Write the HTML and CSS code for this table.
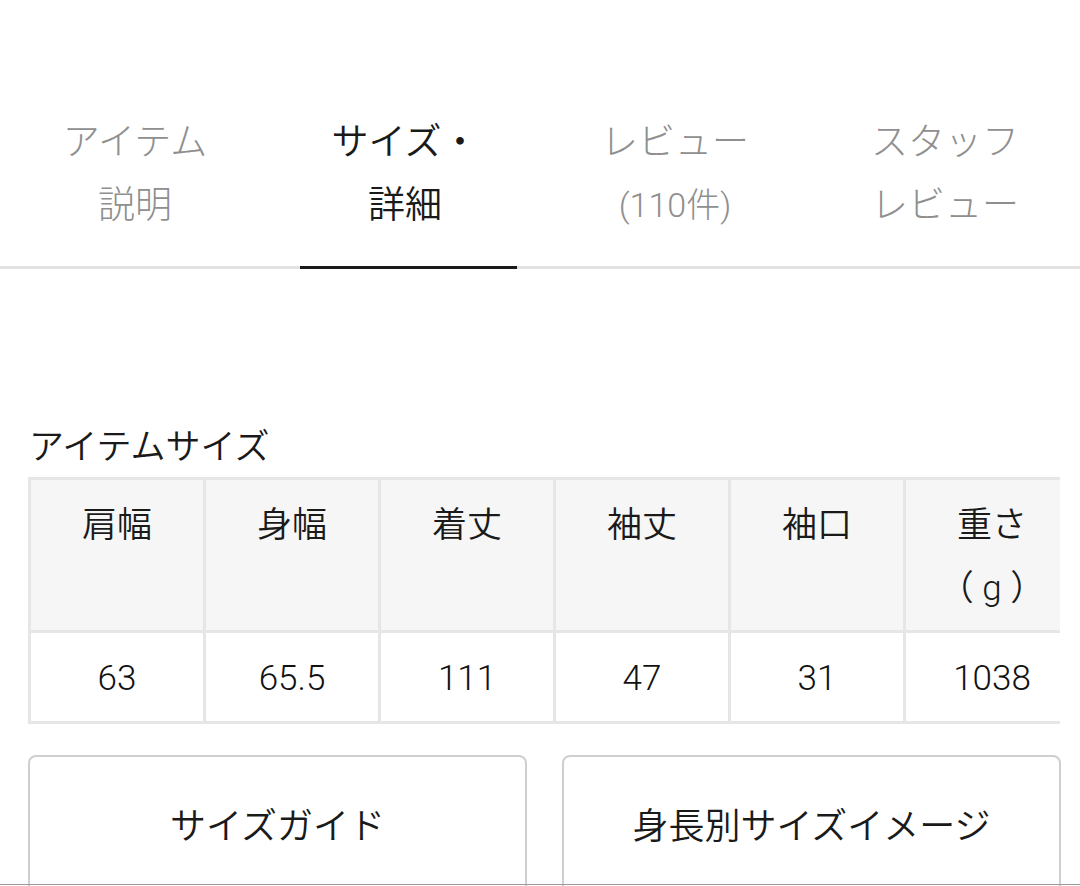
FILE: index.html
```html
<!DOCTYPE html>
<html lang="ja">
<head>
<meta charset="utf-8">
<link rel="stylesheet" href="styles.css">
</head>
<body>
<div class="page">
  <nav class="tabs">
    <div class="tab"><span>アイテム</span><span>説明</span></div>
    <div class="tab active"><span>サイズ・</span><span>詳細</span></div>
    <div class="tab"><span>レビュー</span><span class="count">(110件)</span></div>
    <div class="tab"><span>スタッフ</span><span>レビュー</span></div>
  </nav>

  <section class="sizes">
    <h2 class="heading">アイテムサイズ</h2>
    <div class="table-wrap">
      <table class="size-table">
        <tr class="head">
          <th>肩幅</th><th>身幅</th><th>着丈</th><th>袖丈</th><th>袖口</th><th>重さ<br>（ g ）</th>
        </tr>
        <tr class="values">
          <td>63</td><td>65.5</td><td>111</td><td>47</td><td>31</td><td>1038</td>
        </tr>
      </table>
    </div>
    <div class="buttons">
      <div class="btn">サイズガイド</div>
      <div class="btn">身長別サイズイメージ</div>
    </div>
  </section>
</div>
<div class="bottom-edge"></div>
</body>
</html>
```

FILE: styles.css
```css
html, body {
  margin: 0;
  padding: 0;
  background: #fff;
}
body {
  width: 1080px;
  height: 886px;
  overflow: hidden;
  font-family: "Roboto", "Noto Sans CJK JP", "Noto Sans", sans-serif;
  font-weight: 350;
  color: #222;
}
.page {
  padding-top: 111px;
}
.tabs {
  display: grid;
  grid-template-columns: repeat(4, 270px);
  border-bottom: 3px solid #e2e2e2;
}
.tab {
  position: relative;
  display: flex;
  flex-direction: column;
  align-items: center;
  font-size: 37px;
  font-weight: 300;
  line-height: 63px;
  color: #8f8f8f;
  padding-bottom: 29px;
}
.tab .count {
  font-size: 34px;
}
.tab.active {
  color: #1a1a1a;
  font-weight: 350;
}
.tab.active::after {
  content: "";
  position: absolute;
  left: 30px;
  width: 217px;
  bottom: -3px;
  height: 3px;
  background: #1a1a1a;
}
.sizes {
  padding: 159px 20px 0 28px;
}
.heading {
  margin: 0 0 9px 1px;
  font-size: 35px;
  font-weight: 350;
  line-height: 40px;
  color: #1a1a1a;
}
.table-wrap {
  width: 1032px;
  overflow: hidden;
}
.size-table {
  border-collapse: collapse;
  table-layout: fixed;
  width: 1053px;
}
.size-table th,
.size-table td {
  width: 172px;
  border: 3px solid #e6e6e6;
  text-align: center;
  font-size: 35px;
  font-weight: 350;
  line-height: 63px;
  color: #1a1a1a;
}
.size-table th {
  background: #f6f6f6;
  vertical-align: top;
  padding: 14px 0 10px;
}
.size-table td {
  font-weight: 300;
  color: #111;
  padding: 14px 0 11px;
}
.buttons {
  display: grid;
  grid-template-columns: 499px 499px;
  column-gap: 35px;
  margin-top: 31px;
}
.btn {
  height: 150px;
  box-sizing: border-box;
  border: 2px solid #cfcfcf;
  border-radius: 8px;
  font-size: 36px;
  font-weight: 350;
  line-height: 40px;
  padding-top: 50px;
  text-align: center;
  color: #1a1a1a;
}
.bottom-edge {
  position: fixed;
  left: 0;
  right: 0;
  bottom: 1px;
  height: 1px;
  background: #9a9a9a;
}
```
